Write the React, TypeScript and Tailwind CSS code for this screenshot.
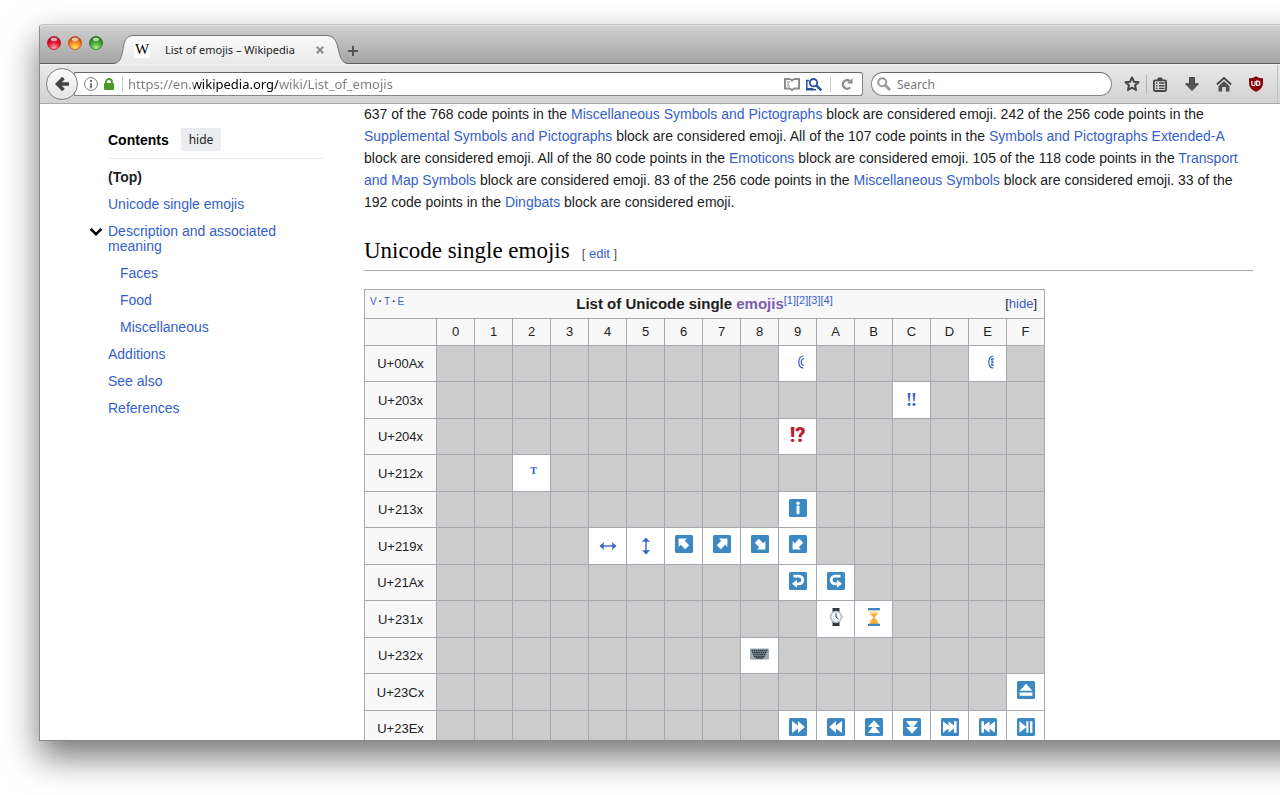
import type { ReactNode } from "react";

const DIAGONAL = "M3.600 3.600H12L9.800 5.800 14.200 10.200 10.200 14.200 5.800 9.800 3.600 12Z";
const FORWARD = "M3 3 9 7.500V3l6.800 6L9 15v-4.500L3 15Z";
const SKIP = "M2 3.200 7.500 7.500V3.200L13 7.500V3.200h2.600v11.600H13v-4.300l-5.500 4.300v-4.300L2 14.800Z";

const COLUMNS = "0123456789ABCDEF".split("");

type Row = { code: string; cells: Record<string, ReactNode> };

const ROWS: Row[] = [
  { code: "U+00Ax", cells: { "9": <HalfMark />, E: <HalfMark registered /> } },
  { code: "U+203x", cells: { C: <span className="pt-1 font-['Liberation_Serif',serif] text-lg leading-5 font-bold">‼</span> } },
  { code: "U+204x", cells: { "9": <span className="font-['Roboto',sans-serif] text-xl leading-5 font-black text-[#be1931]">!?</span> } },
  { code: "U+212x", cells: { "2": <span className="pl-1 font-['Liberation_Serif',serif] text-[10px] leading-4 font-bold">T</span> } },
  { code: "U+213x", cells: { "9": <Tile><circle cx="9" cy="4.2" r="1.7" /><rect x="7.500" y="6.400" width="3" height="8.800" rx="1.200" /></Tile> } },
  {
    code: "U+219x",
    cells: {
      "4": <DoubleArrow />,
      "5": <DoubleArrow vertical />,
      "6": <Tile><path d={DIAGONAL} /></Tile>,
      "7": <Tile><path d={DIAGONAL} transform="rotate(90 9 9)" /></Tile>,
      "8": <Tile><path d={DIAGONAL} transform="rotate(180 9 9)" /></Tile>,
      "9": <Tile><path d={DIAGONAL} transform="rotate(270 9 9)" /></Tile>,
    },
  },
  {
    code: "U+21Ax",
    cells: {
      "9": <Tile><HookArrow /></Tile>,
      A: <Tile><g transform="translate(18 0) scale(-1 1)"><HookArrow /></g></Tile>,
    },
  },
  { code: "U+231x", cells: { A: <Watch />, B: <Hourglass /> } },
  { code: "U+232x", cells: { "8": <Keyboard /> } },
  { code: "U+23Cx", cells: { F: <Tile><path d="M9 2.8 15.4 9.8H2.6ZM2.6 11.6h12.8v3.2H2.6Z" /></Tile> } },
  {
    code: "U+23Ex",
    cells: {
      "9": <Tile><path d={FORWARD} /></Tile>,
      A: <Tile><path d={FORWARD} transform="rotate(180 9 9)" /></Tile>,
      B: <Tile><path d={FORWARD} transform="rotate(270 9 9)" /></Tile>,
      C: <Tile><path d={FORWARD} transform="rotate(90 9 9)" /></Tile>,
      D: <Tile><path d={SKIP} /></Tile>,
      E: <Tile><path d={SKIP} transform="rotate(180 9 9)" /></Tile>,
      F: <Tile><path d="M2.4 3.2 9.6 9 2.4 14.8ZM9.4 3.2h2v11.6h-2ZM13 3.2h2.4v11.6H13Z" /></Tile>,
    },
  },
];

export default function App() {
  return (
    <div className="flex h-screen overflow-hidden bg-white pt-6 pb-[54px] pl-[39px] font-['Liberation_Sans',Arial,sans-serif] text-sm text-[#202122]">
      <div className="-mr-10 flex min-w-0 flex-1 flex-col rounded-t border border-[#8a8a8a] border-t-[#c4c4c4] bg-white shadow-[0_16px_34px_rgba(0,0,0,0.54)]">
        <TitleBar />
        <Toolbar />
        <div className="flex min-h-0 flex-1 overflow-hidden pr-[66px] pl-[68px]">
          <Sidebar />
          <Article />
        </div>
      </div>
    </div>
  );
}

function TitleBar() {
  return (
    <header className="flex h-[39px] shrink-0 items-end rounded-t border-t border-b border-t-[#e2e2e2] border-b-[#5e5e5e] bg-linear-to-b from-[#cfcfcf] to-[#a6a6a6] pl-[7px]">
      <div className="mb-[13px] flex gap-[7px]">
        <button aria-label="Close window" className="size-3.5"><Light id="red" dark="#a8031c" main="#e8142f" glow="#ffb0b0" /></button>
        <button aria-label="Minimize window" className="size-3.5"><Light id="amber" dark="#b5400a" main="#f58a20" glow="#ffe668" /></button>
        <button aria-label="Zoom window" className="size-3.5"><Light id="green" dark="#1d6b16" main="#46a838" glow="#b4f088" /></button>
      </div>
      <div className="relative -mb-px ml-[10px] flex h-[29px] w-[235px] items-center pr-6 pl-[21px]">
        <svg className="absolute inset-0" width="235" height="29" viewBox="0 0 235 29" fill="none">
          <defs>
            <linearGradient id="tab" x1="0" y1="0" x2="0" y2="1">
              <stop stopColor="#fafafa" />
              <stop offset="1" stopColor="#e9e9e9" />
            </linearGradient>
          </defs>
          <path d="M0 29C7 28 8 23 9.500 17C11 9 11 1 20 .5H214C223 1 224 9 226 17C227.500 23 229 28 235 29Z" fill="url(#tab)" />
          <path d="M0 28.500C7 28 8 23 9.500 17C11 9 11 1 20 .5H214C223 1 224 9 226 17C227.500 23 229 28 235 28.500" stroke="#747474" />
        </svg>
        <span className="relative flex size-4 items-center justify-center rounded-xs bg-white font-['Liberation_Serif',serif] text-[15px] text-black">W</span>
        <span className="relative ml-[15px] flex-1 font-['Noto_Sans',sans-serif] text-[11px] whitespace-nowrap text-[#222]">List of emojis – Wikipedia</span>
        <button aria-label="Close tab" className="relative">
          <svg width="8" height="8" viewBox="0 0 8 8" fill="none" stroke="#8e8e8e" strokeWidth="2.2"><path d="m.8.8 6.400 6.400M7.200.8.8 7.200" /></svg>
        </button>
      </div>
      <button aria-label="Open a new tab" className="mb-[7px]">
        <svg width="10" height="10" viewBox="0 0 10 10" fill="none" stroke="#555" strokeWidth="2"><path d="M5 0v10M0 5h10" /></svg>
      </button>
    </header>
  );
}

function Light({ id, dark, main, glow }: { id: string; dark: string; main: string; glow: string }) {
  return (
    <svg width="14" height="14" viewBox="0 0 14 14" className="block">
      <defs>
        <radialGradient id={id} cx=".5" cy=".9" r=".85">
          <stop stopColor={glow} />
          <stop offset=".55" stopColor={main} />
          <stop offset="1" stopColor={dark} />
        </radialGradient>
      </defs>
      <circle cx="7" cy="7" r="6.500" fill={`url(#${id})`} stroke={dark} strokeOpacity=".7" />
      <ellipse cx="7" cy="3.300" rx="3.200" ry="1.900" fill="#fff" fillOpacity=".65" />
    </svg>
  );
}

function Toolbar() {
  return (
    <nav className="flex h-10 shrink-0 items-center border-t border-b border-t-[#efefef] border-b-[#a8a8a8] bg-linear-to-b from-[#e8e8e8] to-[#d2d2d2] pl-1.5 font-['Noto_Sans',sans-serif] text-xs">
      <button aria-label="Back" className="z-10 flex size-8 shrink-0 items-center justify-center rounded-full border border-[#808080] bg-linear-to-b from-[#fbfbfb] to-[#e4e4e4]">
        <svg width="14" height="14" viewBox="0 0 14 14" fill="none" stroke="#444" strokeWidth="3.600"><path d="M8.500 1 2.500 7l6 6M2.500 7H14" /></svg>
      </button>
      <div className="-ml-1 flex h-6 w-[789px] items-center rounded-r-[3px] border border-[#858585] border-t-[#666] bg-white pl-[9px]">
        <button aria-label="Site information">
          <svg width="14" height="14" viewBox="0 0 14 14" fill="none" stroke="#777"><circle cx="7" cy="7" r="6.400" /><path d="M7 3v2M7 6.200v5" strokeWidth="2" /></svg>
        </button>
        <svg className="ml-1.5" width="10" height="12" viewBox="0 0 10 12" fill="#4b9a23"><rect y="5" width="10" height="7" rx="1" /><path d="M2 6V4a3 3 0 0 1 6 0v2" fill="none" stroke="#4b9a23" strokeWidth="1.800" /></svg>
        <span className="ml-2 h-4 w-px bg-[#cfcfcf]" />
        <input
          aria-label="Address"
          defaultValue="https://en.wikipedia.org/wiki/List_of_emojis"
          className="ml-[5px] h-5 min-w-0 flex-1 bg-[linear-gradient(90deg,#7b7b7b_66px,#000_66px,#000_150px,#7b7b7b_150px)] bg-clip-text text-[13px] text-transparent outline-none"
        />
        <button aria-label="Reader view">
          <svg width="16" height="13" viewBox="0 0 16 13" fill="none" stroke="#8c8c8c" strokeWidth="2"><path d="M8 2.500Q6.500 1 5 1H1v9.500h4.500L8 12l2.500-1.500H15V1h-4Q9.500 1 8 2.500Z" /><path d="M3 4h3M3 6h2M3 8h3" strokeWidth="1" /></svg>
        </button>
        <button aria-label="Search this page" className="ml-1.5">
          <svg width="16" height="13" viewBox="0 0 16 13" fill="none" stroke="#2a4f9e" strokeWidth="1.500"><path d="M3 2.500H.8v9.300H10M1 10.800h6.500" /><circle cx="7.500" cy="4.700" r="3.700" strokeWidth="1.800" fill="#fff" /><path d="m10.200 7.400 5.200 5" strokeWidth="2.400" /></svg>
        </button>
        <span className="mx-2 h-4 w-px bg-[#cfcfcf]" />
        <button aria-label="Reload" className="mr-[9px] ml-0.5">
          <svg width="12" height="12" viewBox="0 0 12 12" fill="none" stroke="#8c8c8c" strokeWidth="2.400"><path d="M9.200 9.500A4.300 4.300 0 1 1 8.600 2.800" /><path d="M11.500 0v5.500H6Z" fill="#8c8c8c" stroke="none" /></svg>
        </button>
      </div>
      <label className="ml-2 flex h-6 w-[241px] items-center gap-1.5 rounded-full border border-[#858585] border-t-[#666] bg-white pl-[5px]">
        <svg width="14" height="14" viewBox="0 0 14 14" fill="none" stroke="#999" strokeWidth="2"><circle cx="5.200" cy="5.200" r="4" /><path d="m8 8 5 5" strokeWidth="2.600" /></svg>
        <input aria-label="Search" placeholder="Search" className="h-5 min-w-0 flex-1 bg-transparent outline-none placeholder:text-[#777]" />
      </label>
      <button aria-label="Bookmark this page" className="ml-3">
        <svg width="16" height="16" viewBox="0 0 16 16" fill="none" stroke="#444" strokeWidth="2" strokeLinejoin="round"><path d="m8 1.500 1.900 4.200 4.600.5-3.400 3.100.9 4.700L8 11.700 4 14l.9-4.700L1.500 6.200l4.600-.5Z" /></svg>
      </button>
      <span className="ml-1.5 h-[18px] w-px bg-[#b4b4b4]" />
      <button aria-label="Bookmarks menu" className="ml-1.5">
        <svg width="14" height="15" viewBox="0 0 14 15" fill="none"><path d="M4 2.500 5.500.5h3L10 2.500v1H4Z" fill="#444" /><rect x=".9" y="3.400" width="12.200" height="10.600" rx="1.200" stroke="#444" strokeWidth="1.800" /><path d="M3 6h1.500M6 6h5.500M3 8.700h1.500M6 8.700h5.500M3 11.400h1.500M6 11.400h5.500" stroke="#444" strokeWidth="1.400" /></svg>
      </button>
      <button aria-label="Downloads" className="ml-[18px]">
        <svg width="14" height="14" viewBox="0 0 14 14" fill="#555" stroke="#444"><path d="M4.500.5h5v6.300h4L7 13.500.5 6.800h4Z" /></svg>
      </button>
      <button aria-label="Home" className="ml-[17px]">
        <svg width="16" height="15" viewBox="0 0 16 15" fill="none"><path d="m.8 7.500 7.200-6.500 7.200 6.500" stroke="#444" strokeWidth="1.800" /><path d="M8 4 2.500 9v5.500h3.700V10h3.600v4.500h3.700V9Z" fill="#505050" /></svg>
      </button>
      <button aria-label="uBlock Origin" className="ml-4">
        <svg width="16" height="16" viewBox="0 0 16 16"><path d="M8 .2C5.600 1.900 3.500 2.200 1 2.200V7c0 4 2.500 6.800 7 8.800 4.500-2 7-4.800 7-8.800V2.200C12.500 2.200 10.400 1.900 8 .2Z" fill="#850008" /><path d="M3.800 5v3a1.500 1.500 0 0 0 3.300 0V5M8.700 9.500V5.200h1a2.100 2.100 0 0 1 0 4.300Z" fill="none" stroke="#fff" strokeWidth="1.200" /></svg>
      </button>
      <span className="ml-[13px] h-full w-px bg-[#c2c2c2]" />
    </nav>
  );
}

function Link({ children, className = "text-[#3660cb]" }: { children: ReactNode; className?: string }) {
  return <a href="#" className={className}>{children}</a>;
}

function Sidebar() {
  return (
    <aside className="w-[216px] shrink-0 pt-6">
      <div className="flex items-center gap-3 border-b border-[#e8e8ea] pb-[7px]">
        <h2 className="font-bold text-black">Contents</h2>
        <button className="h-[23px] rounded-xs bg-[#eaecf0] px-2 font-['Noto_Sans',sans-serif] text-xs">hide</button>
      </div>
      <ul className="mt-[5px] leading-[15px]">
        <li className="py-1.5"><Link className="font-bold">(Top)</Link></li>
        <li className="py-1.5"><Link>Unicode single emojis</Link></li>
        <li className="relative pt-1.5">
          <button aria-label="Toggle subsection" className="absolute top-2.5 -left-[18px]">
            <svg width="12" height="8" viewBox="0 0 12 8" fill="none" stroke="#000" strokeWidth="2.400"><path d="m.6.8 5.400 5.400L11.400.8" /></svg>
          </button>
          <Link>Description and associated meaning</Link>
          <ul className="pt-1.5 pl-3">
            <li className="py-1.5"><Link>Faces</Link></li>
            <li className="py-1.5"><Link>Food</Link></li>
            <li className="py-1.5"><Link>Miscellaneous</Link></li>
          </ul>
        </li>
        <li className="py-1.5"><Link>Additions</Link></li>
        <li className="py-1.5"><Link>See also</Link></li>
        <li className="py-1.5"><Link>References</Link></li>
      </ul>
    </aside>
  );
}

function Article() {
  return (
    <main className="ml-10 min-w-0 flex-1">
      <p className="-mt-px leading-[22px]">
        637 of the 768 code points in the <Link>Miscellaneous Symbols and Pictographs</Link> block are considered emoji. 242 of the 256 code points in the{" "}
        <Link>Supplemental Symbols and Pictographs</Link> block are considered emoji. All of the 107 code points in the{" "}
        <Link>Symbols and Pictographs Extended-A</Link> block are considered emoji. All of the 80 code points in the <Link>Emoticons</Link> block are
        considered emoji. 105 of the 118 code points in the <Link>Transport and Map Symbols</Link> block are considered emoji. 83 of the 256 code points in
        the <Link>Miscellaneous Symbols</Link> block are considered emoji. 33 of the 192 code points in the <Link>Dingbats</Link> block are considered emoji.
      </p>
      <div className="mt-6 flex items-baseline border-b border-[#a2a9b1] pb-[5px]">
        <h2 className="font-['Liberation_Serif',Georgia,serif] text-[23px] leading-7 text-black">Unicode single emojis</h2>
        <span className="ml-3 text-[13px] text-[#54595d]">[ <Link>edit</Link> ]</span>
      </div>
      <EmojiTable />
    </main>
  );
}

function EmojiTable() {
  return (
    <table className="mt-[18px] w-[681px] table-fixed border-collapse border border-[#a2a9b1] bg-[#f8f8f8] text-center text-[13px]">
      <colgroup>
        <col className="w-[72px]" />
        {COLUMNS.map((c) => <col key={c} />)}
      </colgroup>
      <thead>
        <tr className="h-[29px]">
          <th colSpan={17} className="border border-[#a2a9b1] px-[5px] font-normal">
            <div className="grid grid-cols-[1fr_auto_1fr] items-center">
              <span className="flex gap-[2px] self-start text-left text-[10px] leading-4">
                <Link>V</Link><b>·</b><Link>T</Link><b>·</b><Link>E</Link>
              </span>
              <span className="text-[15px] leading-5 font-bold">
                List of Unicode single <Link className="text-[#795cb2]">emojis</Link>
                <sup className="top-0 align-[5px] text-[11px] leading-none font-normal"><Link>[1][2][3][4]</Link></sup>
              </span>
              <span className="pr-0.5 text-right">[<button className="text-[#3660cb]">hide</button>]</span>
            </div>
          </th>
        </tr>
        <tr className="h-[27px]">
          <th className="border border-[#a2a9b1]" />
          {COLUMNS.map((c) => <th key={c} scope="col" className="border border-[#a2a9b1] font-normal">{c}</th>)}
        </tr>
      </thead>
      <tbody>
        {ROWS.map((row) => (
          <tr key={row.code} className="odd:h-9 even:h-[37px]">
            <th scope="row" className="border border-[#a2a9b1] pt-0.5 font-normal">{row.code}</th>
            {COLUMNS.map((c) => (
              <td key={c} className={row.cells[c] ? "border border-[#a2a9b1] bg-white p-0" : "border border-[#a2a9b1] bg-[#cccccc] p-0"}>
                {row.cells[c] && <a href="#" className="flex items-center justify-center pb-1 text-[#3660cb]">{row.cells[c]}</a>}
              </td>
            ))}
          </tr>
        ))}
      </tbody>
    </table>
  );
}

function Tile({ children }: { children: ReactNode }) {
  return (
    <svg width="18" height="18" viewBox="0 0 18 18" fill="#fff">
      <rect width="18" height="18" rx="1.500" fill="#3b88c3" />
      {children}
    </svg>
  );
}

function HookArrow() {
  return (
    <>
      <path d="M4.500 4.200H10a3.800 3.800 0 0 1 0 7.600H7" fill="none" stroke="#fff" strokeWidth="2.800" />
      <path d="M3 11.800 8 7.800v8Z" />
    </>
  );
}

function DoubleArrow({ vertical }: { vertical?: boolean }) {
  return (
    <svg width="18" height="18" viewBox="0 0 18 18" fill="#3660cb" className="mt-1">
      <g transform={vertical ? "rotate(90 9 9)" : undefined}>
        <path d="M3 8.300h12v1.400H3Z" />
        <path d="m.5 9 4.500-4-.6 4 .6 4ZM17.500 9 13 5l.6 4-.6 4Z" />
      </g>
    </svg>
  );
}

function HalfMark({ registered }: { registered?: boolean }) {
  return (
    <svg width="6" height="14" viewBox="0 0 6 14" fill="none" stroke="#3660cb" strokeWidth="1.200" className="ml-1.5">
      <path d="M5.500 1C2.500 1 .8 3.500 .8 7s1.700 6 4.700 6" />
      {registered ? <path d="M4 3.500v7M3 3.800h3M4 7h2M3 10.200h3" /> : <path d="M5.800 3.500C4 4 3.200 5 3.200 7s.8 3 2.600 3.500" />}
    </svg>
  );
}

function Watch() {
  return (
    <svg width="18" height="18" viewBox="0 0 18 18">
      <path d="M5.500 0h7v4h-7ZM5.500 14h7v4h-7Z" fill="#31373d" />
      <rect x="14.500" y="7.800" width="2" height="2.400" fill="#ccd6dd" />
      <circle cx="9" cy="9" r="6.200" fill="#b5c1c9" />
      <circle cx="9" cy="9" r="4.700" fill="#f5f8fa" />
      <path d="M9 5.500V9l2.500 2" fill="none" stroke="#31373d" />
    </svg>
  );
}

function Hourglass() {
  return (
    <svg width="18" height="18" viewBox="0 0 18 18">
      <path d="M4.500 2h9v2c0 2.500-3.500 3.500-3.500 5s3.500 2.500 3.500 5v2h-9v-2c0-2.500 3.500-3.500 3.500-5S4.500 6.500 4.500 4Z" fill="#ffe8b6" />
      <path d="M5 5.500h8C12.300 7 10 8 9.700 9.500c.3 2 3.300 2.800 3.300 6.500H5c0-3.700 3-4.500 3.300-6.500C8 8 5.700 7 5 5.500Z" fill="#ffac33" />
      <path d="M3 0h12v2.200H3ZM3 15.800h12V18H3Z" fill="#3b88c3" />
    </svg>
  );
}

function Keyboard() {
  return (
    <svg width="19" height="18" viewBox="0 0 19 18">
      <rect y="3.500" width="19" height="11" rx="1" fill="#99aab5" />
      <path d="M1.500 5.500h16M2 7.500h15M3 9.500h13M4 11.500h11" stroke="#292f33" strokeWidth="1.500" strokeDasharray="1.600 .5" />
      <path d="M5.500 13h8" stroke="#292f33" strokeWidth="1.200" />
    </svg>
  );
}
